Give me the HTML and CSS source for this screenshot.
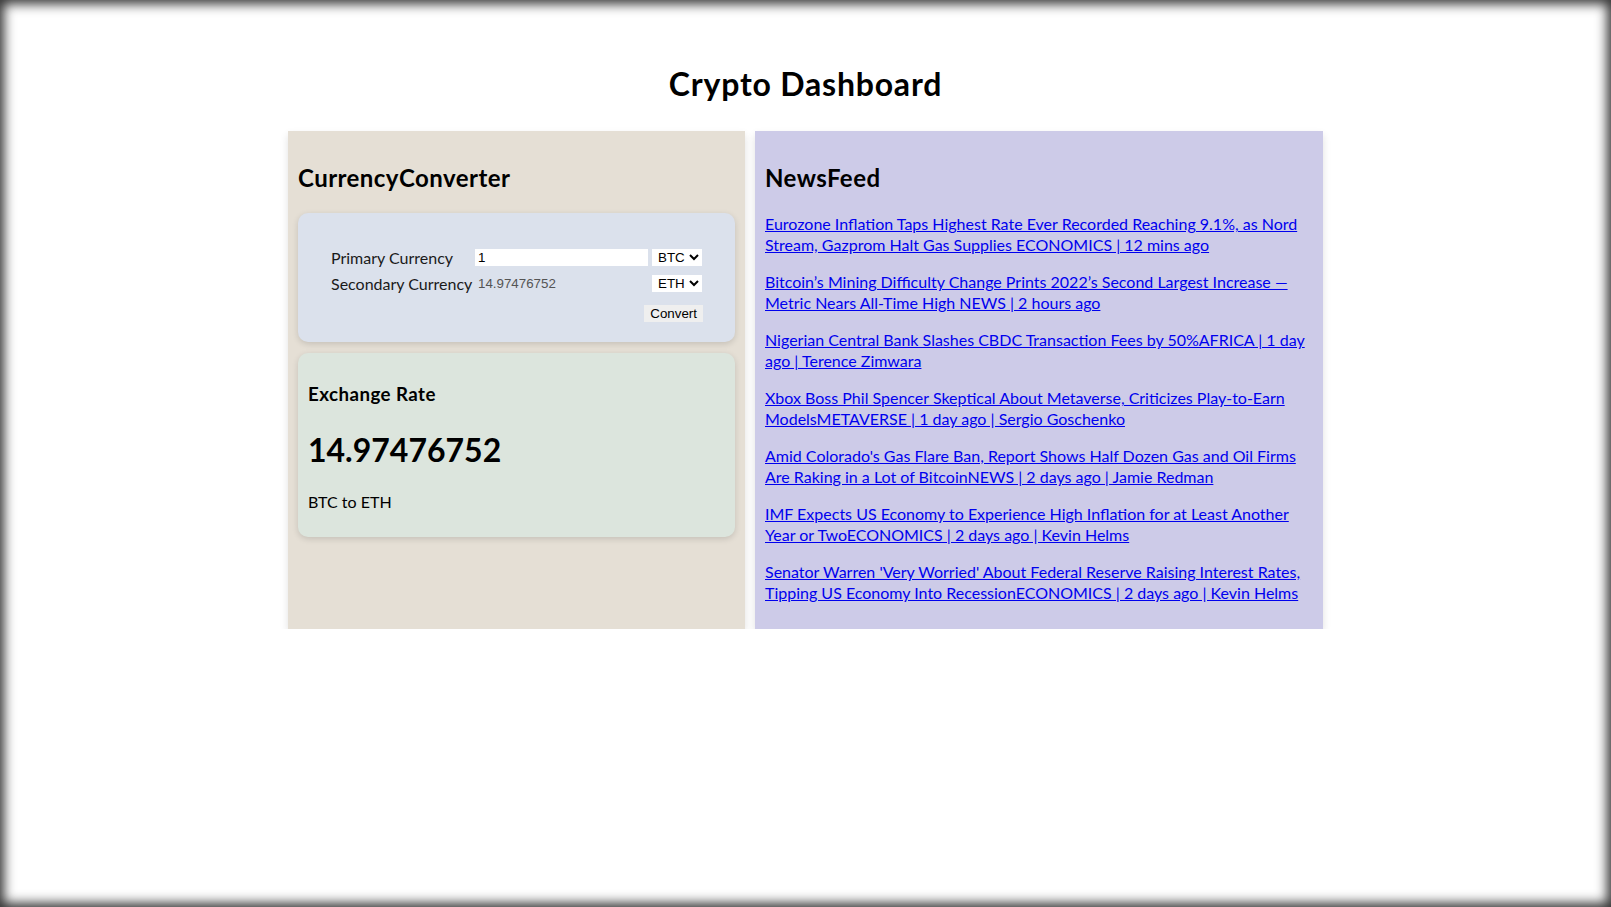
FILE: index.html
```html
<!DOCTYPE html>
<html lang="en">
<head>
<meta charset="utf-8">
<title>Crypto Dashboard</title>
<link rel="stylesheet" href="styles.css">
</head>
<body>
<div class="app">
  <h1 class="title">Crypto Dashboard</h1>
  <div class="dashboard">
    <section class="converter-panel">
      <h2 class="panel-heading">CurrencyConverter</h2>
      <div class="converter-box">
        <div class="converter-grid">
          <label class="field-label" for="primary">Primary Currency</label>
          <input class="amount-input" id="primary" type="number" value="1">
          <select class="currency-select">
            <option>BTC</option>
            <option>ETH</option>
          </select>
          <label class="field-label" for="secondary">Secondary Currency</label>
          <input class="amount-input result-input" id="secondary" type="text" value="14.97476752" disabled>
          <select class="currency-select">
            <option>ETH</option>
            <option>BTC</option>
          </select>
          <button class="convert-button" type="button">Convert</button>
        </div>
      </div>
      <div class="exchange-box">
        <h3 class="exchange-heading">Exchange Rate</h3>
        <h1 class="exchange-value">14.97476752</h1>
        <p class="exchange-pair">BTC to ETH</p>
      </div>
    </section>
    <section class="news-panel">
      <h2 class="panel-heading">NewsFeed</h2>
      <p class="news-item"><a href="#">Eurozone Inflation Taps Highest Rate Ever Recorded Reaching 9.1%, as Nord Stream, Gazprom Halt Gas Supplies ECONOMICS | 12 mins ago</a></p>
      <p class="news-item"><a href="#">Bitcoin’s Mining Difficulty Change Prints 2022’s Second Largest Increase — Metric Nears All-Time High NEWS | 2 hours ago</a></p>
      <p class="news-item"><a href="#">Nigerian Central Bank Slashes CBDC Transaction Fees by 50%AFRICA | 1 day ago | Terence Zimwara</a></p>
      <p class="news-item"><a href="#">Xbox Boss Phil Spencer Skeptical About Metaverse, Criticizes Play-to-Earn ModelsMETAVERSE | 1 day ago | Sergio Goschenko</a></p>
      <p class="news-item"><a href="#">Amid Colorado's Gas Flare Ban, Report Shows Half Dozen Gas and Oil Firms Are Raking in a Lot of BitcoinNEWS | 2 days ago | Jamie Redman</a></p>
      <p class="news-item"><a href="#">IMF Expects US Economy to Experience High Inflation for at Least Another Year or TwoECONOMICS | 2 days ago | Kevin Helms</a></p>
      <p class="news-item"><a href="#">Senator Warren 'Very Worried' About Federal Reserve Raising Interest Rates, Tipping US Economy Into RecessionECONOMICS | 2 days ago | Kevin Helms</a></p>
    </section>
  </div>
</div>
<div class="vignette"></div>
</body>
</html>
```
FILE: styles.css
```css
html, body {
  margin: 0;
  padding: 0;
  background: #ffffff;
}

body {
  font-family: Lato, "Open Sans", sans-serif;
  font-size: 16px;
  line-height: 21px;
  color: #000;
}

.app {
  padding-top: 62px;
}

.title {
  margin: 0 0 26px;
  font-size: 32px;
  line-height: 43px;
  font-weight: 700;
  letter-spacing: 0.8px;
  text-align: center;
}

.dashboard {
  display: flex;
  justify-content: center;
  align-items: stretch;
  gap: 10px;
}

.converter-panel {
  width: 457px;
  box-sizing: border-box;
  padding: 10px;
  background: #e5dfd5;
  box-shadow: 0 4px 8px rgba(0, 0, 0, 0.12);
}

.news-panel {
  width: 568px;
  box-sizing: border-box;
  padding: 10px;
  background: #cdcbe8;
  box-shadow: 0 4px 8px rgba(0, 0, 0, 0.12);
}

.panel-heading {
  margin: 21px 0 19px;
  font-size: 24px;
  line-height: 32px;
  font-weight: 700;
  letter-spacing: 0.45px;
}

.converter-box {
  background: #dbe1ec;
  border-radius: 10px;
  padding: 36px 31px 20px 33px;
  box-shadow: 0 2px 6px rgba(0, 0, 0, 0.14);
}

.converter-grid {
  display: grid;
  grid-template-columns: 140px 173px 50px;
  column-gap: 4px;
  row-gap: 9px;
  align-items: center;
}

.field-label {
  font-size: 16px;
  line-height: 17px;
  color: #1a1a1a;
  white-space: nowrap;
}

.amount-input {
  box-sizing: border-box;
  width: 173px;
  height: 17px;
  margin: 0;
  padding: 1px 3px;
  border: none;
  outline: none;
  background: #ffffff;
  font-family: "Liberation Sans", Arial, sans-serif;
  font-size: 13.3333px;
  color: #000;
  -moz-appearance: textfield;
}

.amount-input::-webkit-outer-spin-button,
.amount-input::-webkit-inner-spin-button {
  -webkit-appearance: none;
  margin: 0;
}

.result-input {
  background: transparent;
  color: #545454;
}

.currency-select {
  box-sizing: border-box;
  width: 50px;
  height: 17px;
  margin: 0;
  padding: 0 0 0 2px;
  border: none;
  border-radius: 0;
  background: #ffffff;
  font-family: "Liberation Sans", Arial, sans-serif;
  font-size: 13.3333px;
  color: #000;
}

.convert-button {
  grid-column: 1 / -1;
  justify-self: end;
  margin-top: 4px;
  margin-right: -1px;
  height: 17px;
  padding: 0 6px;
  border: none;
  border-radius: 0;
  background: #efefef;
  font-family: "Liberation Sans", Arial, sans-serif;
  font-size: 13.3333px;
  line-height: 17px;
  color: #000;
}

.exchange-box {
  margin-top: 11px;
  padding: 10px;
  background: #dce5dd;
  border-radius: 10px;
  box-shadow: 0 2px 6px rgba(0, 0, 0, 0.14);
}

.exchange-heading {
  margin: 19px 0 21px;
  font-size: 18.72px;
  line-height: 25px;
  font-weight: 700;
  letter-spacing: 0.45px;
}

.exchange-value {
  margin: 0 0 20px;
  font-size: 32px;
  line-height: 43px;
  font-weight: 700;
}

.exchange-pair {
  margin: 0 0 15px;
}

.news-item {
  margin: 16px 0;
}

.news-item a {
  color: #0000ee;
  text-decoration: underline;
}

.vignette {
  position: fixed;
  inset: 0;
  pointer-events: none;
  box-shadow: inset 0 0 12px 4px rgba(0, 0, 0, 0.8);
}
```
